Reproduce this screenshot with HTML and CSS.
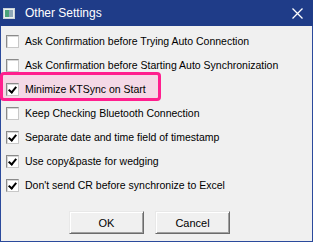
FILE: index.html
```html
<!DOCTYPE html>
<html lang="en">
<head>
    <meta charset="UTF-8">
    <title>Other Settings</title>
    <link rel="stylesheet" href="styles.css">
</head>
<body>
    <div class="dialog">
        <div class="titlebar">
            <svg class="app-icon" width="12" height="11" viewBox="0 0 12 11">
                <rect x="0.5" y="0.5" width="11" height="10" fill="#e8eef0" stroke="#c9d3d6"/>
                <rect x="2" y="2" width="4" height="7" fill="#4aa37a"/>
                <rect x="6" y="2" width="4" height="7" fill="#8fa8b8"/>
            </svg>
            <span class="title">Other Settings</span>
            <svg class="close" width="11" height="11" viewBox="0 0 11 11">
                <path d="M0.5 0.5 L10.5 10.5 M10.5 0.5 L0.5 10.5" stroke="#fff" stroke-width="1.3"/>
            </svg>
        </div>
        <div class="content">
            <div class="option">
                <span class="box"></span>
                <span class="label">Ask Confirmation before Trying Auto Connection</span>
            </div>
            <div class="option">
                <span class="box"></span>
                <span class="label">Ask Confirmation before Starting Auto Synchronization</span>
            </div>
            <div class="option highlight">
                <span class="box checked"></span>
                <span class="label">Minimize KTSync on Start</span>
            </div>
            <div class="option">
                <span class="box"></span>
                <span class="label">Keep Checking Bluetooth Connection</span>
            </div>
            <div class="option">
                <span class="box checked"></span>
                <span class="label">Separate date and time field of timestamp</span>
            </div>
            <div class="option">
                <span class="box checked"></span>
                <span class="label">Use copy&amp;paste for wedging</span>
            </div>
            <div class="option">
                <span class="box checked"></span>
                <span class="label">Don't send CR before synchronize to Excel</span>
            </div>
            <div class="buttons">
                <button type="button" class="btn">OK</button>
                <button type="button" class="btn">Cancel</button>
            </div>
        </div>
    </div>
</body>
</html>
```

FILE: styles.css
```css
:root {
    --title-blue: #1f3c88;
    --frame-blue: #2b4a9c;
    --face: #f0f0f0;
    --pink: #ff1f8e;
    --pink-fill: #f4d9e6;
}

body {
    margin: 0;
    font-family: 'Liberation Sans', Arial, sans-serif;
    font-size: 10.5px;
    color: #000;
}

.dialog {
    width: 313px;
    height: 242px;
    box-sizing: border-box;
    background-color: var(--face);
    border: 1px solid var(--frame-blue);
    border-top: none;
    display: flex;
    flex-direction: column;
}

.titlebar {
    height: 26px;
    flex-shrink: 0;
    background-color: var(--title-blue);
    display: flex;
    align-items: center;
    padding: 0 10px 0 3px;
    margin: 0 -1px;
}

.app-icon {
    margin-right: 10px;
}

.title {
    color: #fff;
    font-size: 12px;
    flex: 1;
}

.content {
    padding: 3px 0 0 5px;
    display: flex;
    flex-direction: column;
}

.option {
    height: 24px;
    display: flex;
    align-items: center;
    position: relative;
}

.box {
    width: 13px;
    height: 13px;
    box-sizing: border-box;
    background-color: #fff;
    border: 1px solid #8a8a8a;
    border-right-color: #c8c8c8;
    border-bottom-color: #c8c8c8;
    box-shadow: inset 1px 1px 0 #d8d8d8;
    margin-right: 6px;
    position: relative;
}

.box.checked::after {
    content: '';
    position: absolute;
    left: 3px;
    top: 1px;
    width: 3px;
    height: 6px;
    border: solid #000;
    border-width: 0 2px 2px 0;
    transform: rotate(40deg);
}

.highlight::before {
    content: '';
    position: absolute;
    left: -6px;
    top: -5px;
    width: 161px;
    height: 29px;
    box-sizing: border-box;
    border: 3px solid var(--pink);
    border-radius: 4px;
    background-color: var(--pink-fill);
}

.highlight .box,
.highlight .label {
    z-index: 1;
}

.highlight .label {
    position: relative;
}

.buttons {
    display: flex;
    gap: 11px;
    padding: 14px 0 0 63px;
}

.btn {
    width: 75px;
    height: 23px;
    font-family: inherit;
    font-size: 11px;
    background-color: var(--face);
    border: 1px solid #6b6b6b;
    border-top-color: #e8e8e8;
    border-left-color: #e8e8e8;
    box-shadow: inset 1px 1px 0 #fff, inset -1px -1px 0 #a0a0a0;
    padding: 0;
}
```
